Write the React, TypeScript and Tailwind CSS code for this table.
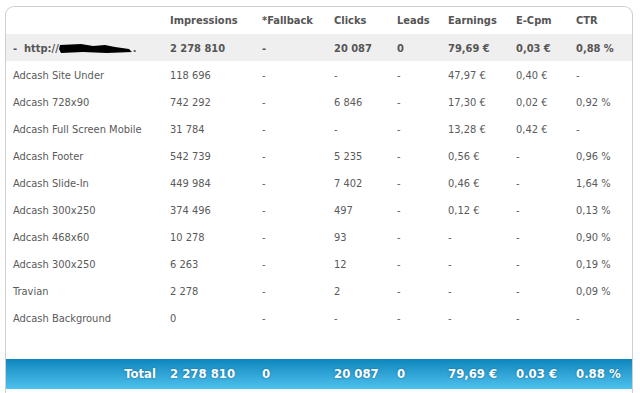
// Ad stats table — per-zone impressions, clicks, earnings with blue total bar.

interface Row {
  name: string;
  impressions: string;
  fallback: string;
  clicks: string;
  leads: string;
  earnings: string;
  ecpm: string;
  ctr: string;
}

const rows: Row[] = [
  { name: 'Adcash Site Under',         impressions: '118 696', fallback: '-', clicks: '-',     leads: '-', earnings: '47,97 €', ecpm: '0,40 €', ctr: '-' },
  { name: 'Adcash 728x90',             impressions: '742 292', fallback: '-', clicks: '6 846', leads: '-', earnings: '17,30 €', ecpm: '0,02 €', ctr: '0,92 %' },
  { name: 'Adcash Full Screen Mobile', impressions: '31 784',  fallback: '-', clicks: '-',     leads: '-', earnings: '13,28 €', ecpm: '0,42 €', ctr: '-' },
  { name: 'Adcash Footer',             impressions: '542 739', fallback: '-', clicks: '5 235', leads: '-', earnings: '0,56 €',  ecpm: '-',      ctr: '0,96 %' },
  { name: 'Adcash Slide-In',           impressions: '449 984', fallback: '-', clicks: '7 402', leads: '-', earnings: '0,46 €',  ecpm: '-',      ctr: '1,64 %' },
  { name: 'Adcash 300x250',            impressions: '374 496', fallback: '-', clicks: '497',   leads: '-', earnings: '0,12 €',  ecpm: '-',      ctr: '0,13 %' },
  { name: 'Adcash 468x60',             impressions: '10 278',  fallback: '-', clicks: '93',    leads: '-', earnings: '-',       ecpm: '-',      ctr: '0,90 %' },
  { name: 'Adcash 300x250',            impressions: '6 263',   fallback: '-', clicks: '12',    leads: '-', earnings: '-',       ecpm: '-',      ctr: '0,19 %' },
  { name: 'Travian',                   impressions: '2 278',   fallback: '-', clicks: '2',     leads: '-', earnings: '-',       ecpm: '-',      ctr: '0,09 %' },
  { name: 'Adcash Background',         impressions: '0',       fallback: '-', clicks: '-',     leads: '-', earnings: '-',       ecpm: '-',      ctr: '-' },
];

const colWidths = [156, 92, 72, 63, 51, 68, 60, 64];

// blacked-out part of the site url
function Redacted() {
  return (
    <svg width="74" height="10" viewBox="0 0 74 10" className="inline-block align-middle">
      <path d="M1 1 L22 0 L34 2 L46 1 L56 3 L70 5 L73 8 L48 9 L24 8 L2 9 L0 5 Z" fill="#000" />
    </svg>
  );
}

export default function App() {
  return (
    <div className="w-[640px] h-[393px] bg-white overflow-hidden pt-[6px] pl-[5px]" style={{ fontFamily: '"DejaVu Sans Condensed", "DejaVu Sans", Tahoma, sans-serif' }}>
      <div className="w-[628px] h-[400px] border border-[#cfcfcf] border-b-0 rounded-t-[9px] bg-white">
        <table className="border-collapse table-fixed w-[626px] text-[11px] text-[#5a5a5a]">
          <colgroup>
            {colWidths.map((w, i) => (
              <col key={i} style={{ width: w }} />
            ))}
          </colgroup>
          <thead>
            <tr className="h-[27px] font-bold text-[#555]">
              <th className="pt-[2px]" />
              <th className="text-left pl-2 pt-[2px]">Impressions</th>
              <th className="text-left pl-2 pt-[2px]">*Fallback</th>
              <th className="text-left pl-2 pt-[2px]">Clicks</th>
              <th className="text-left pl-2 pt-[2px]">Leads</th>
              <th className="text-left pl-2 pt-[2px]">Earnings</th>
              <th className="text-left pl-2 pt-[2px]">E-Cpm</th>
              <th className="text-left pl-2 pt-[2px]">CTR</th>
            </tr>
          </thead>
          <tbody>
            <tr className="h-[27px] bg-[#efefef] font-bold text-[#555]">
              <td className="pl-[7px] pt-[4px] whitespace-nowrap">
                -&nbsp; http://<Redacted />.
              </td>
              <td className="pl-2 pt-[4px]">2 278 810</td>
              <td className="pl-2 pt-[4px]">-</td>
              <td className="pl-2 pt-[4px]">20 087</td>
              <td className="pl-2 pt-[4px]">0</td>
              <td className="pl-2 pt-[4px]">79,69 €</td>
              <td className="pl-2 pt-[4px]">0,03 €</td>
              <td className="pl-2 pt-[4px]">0,88 %</td>
            </tr>
            {rows.map((r, i) => (
              <tr key={i} className="h-[27px]">
                <td className="pl-[7px] pt-[4px] whitespace-nowrap">{r.name}</td>
                <td className="pl-2 pt-[4px]">{r.impressions}</td>
                <td className="pl-2 pt-[4px]">{r.fallback}</td>
                <td className="pl-2 pt-[4px]">{r.clicks}</td>
                <td className="pl-2 pt-[4px]">{r.leads}</td>
                <td className="pl-2 pt-[4px]">{r.earnings}</td>
                <td className="pl-2 pt-[4px]">{r.ecpm}</td>
                <td className="pl-2 pt-[4px]">{r.ctr}</td>
              </tr>
            ))}
            <tr className="h-[28px]">
              <td colSpan={8} />
            </tr>
            <tr
              className="h-[30px] bg-gradient-to-b from-[#0886bd] to-[#4cc2ee] text-white font-bold text-[13px]"
              style={{ textShadow: '0 0 2px rgba(0,60,100,0.6)' }}
            >
              <td className="text-right pr-[6px]">Total</td>
              <td className="pl-2">2 278 810</td>
              <td className="pl-2">0</td>
              <td className="pl-2">20 087</td>
              <td className="pl-2">0</td>
              <td className="pl-2">79,69 €</td>
              <td className="pl-2">0.03 €</td>
              <td className="pl-2">0.88 %</td>
            </tr>
          </tbody>
        </table>
      </div>
    </div>
  );
}
